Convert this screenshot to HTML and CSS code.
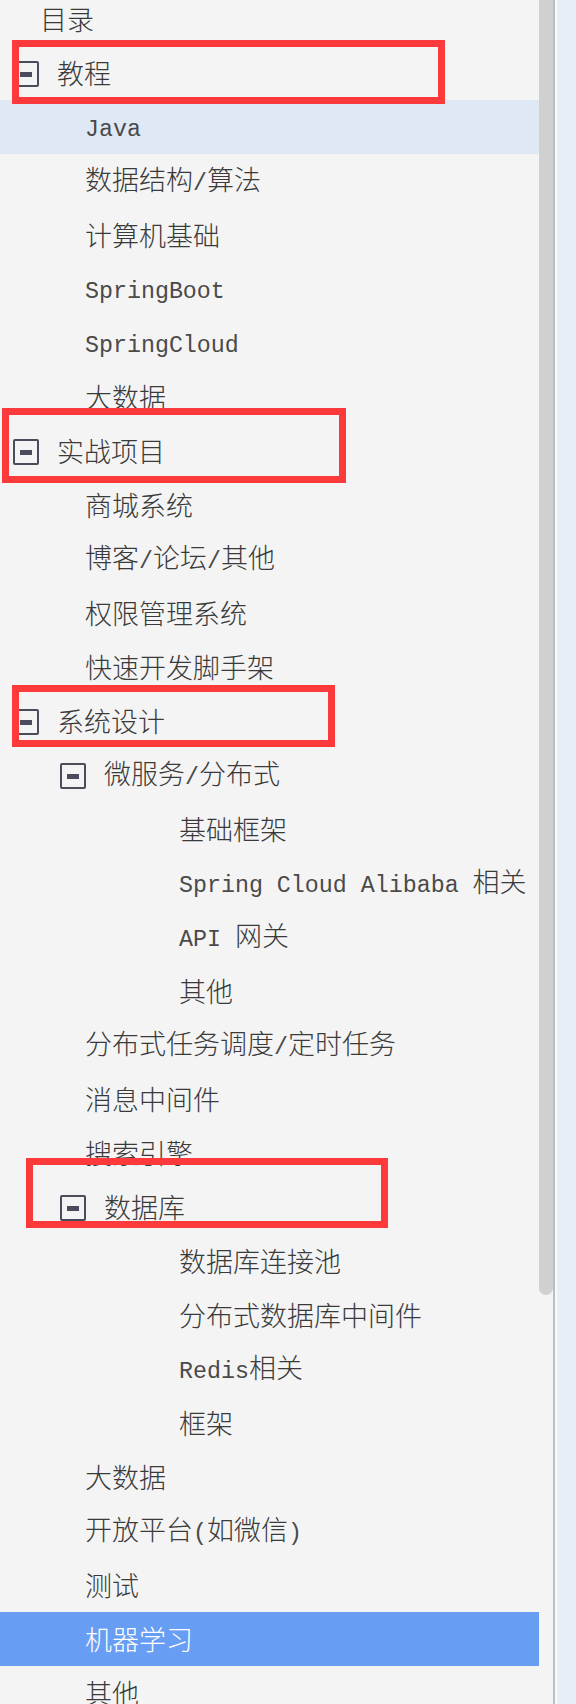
FILE: index.html
```html
<!DOCTYPE html>
<html lang="zh-CN">
<head>
<meta charset="utf-8">
<title>目录</title>
<link rel="stylesheet" href="styles.css">
</head>
<body>
<div class="app">
  <div class="tree">
    <div class="title">目录</div>
    <div class="row l1"><span class="tog"></span><span class="label">教程</span></div>
    <div class="row l2 hover"><span class="label"><span class="en">Java</span></span></div>
    <div class="row l2"><span class="label">数据结构<span class="en">/</span>算法</span></div>
    <div class="row l2"><span class="label">计算机基础</span></div>
    <div class="row l2"><span class="label"><span class="en">SpringBoot</span></span></div>
    <div class="row l2"><span class="label"><span class="en">SpringCloud</span></span></div>
    <div class="row l2"><span class="label">大数据</span></div>
    <div class="row l1"><span class="tog"></span><span class="label">实战项目</span></div>
    <div class="row l2"><span class="label">商城系统</span></div>
    <div class="row l2"><span class="label">博客<span class="en">/</span>论坛<span class="en">/</span>其他</span></div>
    <div class="row l2"><span class="label">权限管理系统</span></div>
    <div class="row l2"><span class="label">快速开发脚手架</span></div>
    <div class="row l1"><span class="tog"></span><span class="label">系统设计</span></div>
    <div class="row l2p"><span class="tog"></span><span class="label">微服务<span class="en">/</span>分布式</span></div>
    <div class="row l3"><span class="label">基础框架</span></div>
    <div class="row l3"><span class="label"><span class="en">Spring Cloud Alibaba </span>相关</span></div>
    <div class="row l3"><span class="label"><span class="en">API </span>网关</span></div>
    <div class="row l3"><span class="label">其他</span></div>
    <div class="row l2"><span class="label">分布式任务调度<span class="en">/</span>定时任务</span></div>
    <div class="row l2"><span class="label">消息中间件</span></div>
    <div class="row l2"><span class="label">搜索引擎</span></div>
    <div class="row l2p"><span class="tog"></span><span class="label">数据库</span></div>
    <div class="row l3"><span class="label">数据库连接池</span></div>
    <div class="row l3"><span class="label">分布式数据库中间件</span></div>
    <div class="row l3"><span class="label"><span class="en">Redis</span>相关</span></div>
    <div class="row l3"><span class="label">框架</span></div>
    <div class="row l2"><span class="label">大数据</span></div>
    <div class="row l2"><span class="label">开放平台<span class="en">(</span>如微信<span class="en">)</span></span></div>
    <div class="row l2"><span class="label">测试</span></div>
    <div class="row l2 sel"><span class="label">机器学习</span></div>
    <div class="row l2"><span class="label">其他</span></div>
  </div>
  <div class="scroll"><div class="thumb"></div></div>
  <div class="sep"></div>
  <div class="gap"></div>
  <div class="side"></div>

  <div class="mark mark1"></div>
  <div class="mark mark2"></div>
  <div class="mark mark3"></div>
  <div class="mark mark4"></div>
</div>
</body>
</html>
```

FILE: styles.css
```css
html, body {
  margin: 0;
  padding: 0;
}
body {
  background: #f4f4f4;
  font-family: "Noto Sans CJK SC", "Noto Sans", sans-serif;
  color: #3a3a3a;
}
.app {
  position: relative;
  display: flex;
  width: 576px;
  height: 1704px;
  overflow: hidden;
}
.tree {
  width: 539px;
  flex: none;
  background: #f4f4f4;
}
.title {
  height: 46px;
  line-height: 38px;
  padding-left: 40px;
  font-size: 27px;
  font-weight: 300;
  box-sizing: border-box;
}
.row {
  height: 54px;
  display: flex;
  align-items: center;
  font-size: 27px;
  font-weight: 300;
  white-space: nowrap;
}
.label {
  line-height: 54px;
}
.en {
  font-family: "Liberation Mono", "DejaVu Sans Mono", monospace;
  font-size: 23.3px;
  font-weight: 400;
  color: #4a4a4a;
}
.sel .en {
  color: #ffffff;
}
.l1 { padding-left: 13px; }
.l2 { padding-left: 85px; }
.l2p { padding-left: 60px; }
.l3 { padding-left: 179px; }
.tog {
  width: 26px;
  height: 26px;
  box-sizing: border-box;
  border: 2.5px solid #4a4b5b;
  border-radius: 2px;
  margin-right: 18px;
  display: flex;
  align-items: center;
  justify-content: center;
  flex: none;
  position: relative;
  top: 1px;
}
.tog::after {
  content: "";
  width: 12px;
  height: 5px;
  background: #4a4b5b;
}
.hover {
  background: #dfe9f5;
}
.sel {
  background: #679df3;
  color: #ffffff;
}
.scroll {
  width: 14px;
  flex: none;
  background: #f4f4f4;
}
.thumb {
  height: 1295px;
  background: #d0d0d0;
  border-radius: 0 0 7px 7px;
}
.sep {
  width: 2px;
  flex: none;
  background: #b9bec6;
}
.gap {
  width: 2px;
  flex: none;
  background: #f8f9fb;
}
.side {
  flex: 1;
  background: #e8eef7;
}
.mark {
  position: absolute;
  border: 7px solid #fd3a3b;
  box-sizing: border-box;
}
.mark1 { left: 12px; top: 40px; width: 433px; height: 64px; }
.mark2 { left: 2px; top: 408px; width: 344px; height: 75px; }
.mark3 { left: 12px; top: 685px; width: 323px; height: 62px; }
.mark4 { left: 26px; top: 1158px; width: 362px; height: 70px; }
```
